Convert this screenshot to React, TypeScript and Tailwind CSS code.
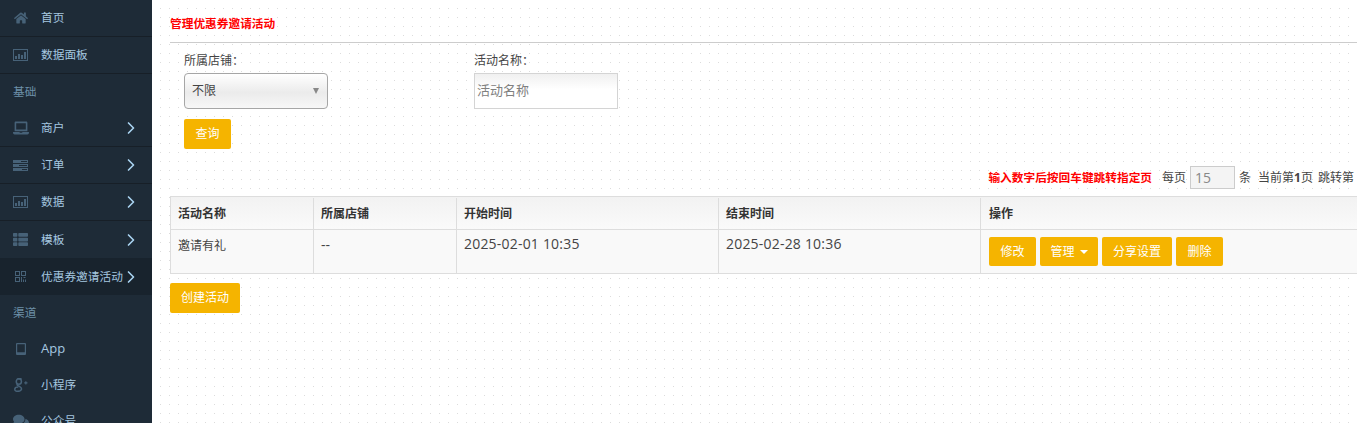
import type { ReactNode } from 'react'
import { ChevronRight } from 'lucide-react'
import { FaHome, FaLaptop, FaThList, FaComments } from 'react-icons/fa'

const font = "font-['Open_Sans','Noto_Sans_CJK_SC',sans-serif]"

function ChartIcon() {
  return (
    <svg width="15" height="12" viewBox="0 0 15 12" fill="none">
      <rect x="0.5" y="0.5" width="14" height="11" stroke="currentColor" />
      <path d="M2 7h2v3H2zM5 5h2v5H5zM8 6h2v4H8zM11 3h2v7h-2z" fill="currentColor" />
    </svg>
  )
}

function StripesIcon() {
  return (
    <svg width="15" height="11" viewBox="0 0 15 11" fill="currentColor">
      <path d="M0 0h15v3H0zM0 4h15v3H0zM0 8h15v3H0z" />
      <path d="M8 1h6v1H8zM6 5h8v1H6zM9 9h5v1H9z" fill="#1e2b37" />
    </svg>
  )
}

function QrIcon() {
  return (
    <svg width="11" height="11" viewBox="0 0 11 11" fill="none" stroke="currentColor">
      <rect x="0.5" y="0.5" width="4" height="4" />
      <rect x="6.5" y="0.5" width="4" height="4" />
      <rect x="0.5" y="6.5" width="4" height="4" />
      <path d="M6.5 6v5M8.5 6.5h2M8.5 8.5v2.5M10.5 8.5v2.5" />
    </svg>
  )
}

function TabletIcon() {
  return (
    <svg width="10" height="12" viewBox="0 0 10 12" fill="currentColor">
      <path d="M1 0h8a1 1 0 0 1 1 1v10a1 1 0 0 1-1 1H1a1 1 0 0 1-1-1V1a1 1 0 0 1 1-1zm.2 1.200v8h7.600v-8z" fillRule="evenodd" />
    </svg>
  )
}

function GPlusIcon() {
  return (
    <svg width="14" height="14" viewBox="0 0 13 13" fill="none" stroke="currentColor" strokeWidth="1.4">
      <ellipse cx="4.500" cy="3.200" rx="2.400" ry="2.600" />
      <path d="M3.400 5.600C2 6.600 3.600 7 5 7.800c1.800 1 2.200 1.600 2 2.600-.3 1.400-1.900 2-3.600 2C1.600 12.400.7 11.500.7 10.400c0-1.200 1.500-2 3.300-2M7 .8H3.500" />
      <path d="M9.500 4.500h3M11 3v3" strokeWidth="1" />
    </svg>
  )
}

type Item = { type: 'link' | 'head'; label: string; icon?: ReactNode; arrow?: boolean; active?: boolean; plain?: boolean }

const menu: Item[] = [
  { type: 'link', label: '首页', icon: <FaHome size={14} /> },
  { type: 'link', label: '数据面板', icon: <ChartIcon /> },
  { type: 'head', label: '基础' },
  { type: 'link', label: '商户', icon: <FaLaptop size={16} />, arrow: true },
  { type: 'link', label: '订单', icon: <StripesIcon />, arrow: true },
  { type: 'link', label: '数据', icon: <ChartIcon />, arrow: true },
  { type: 'link', label: '模板', icon: <FaThList size={15} />, arrow: true, plain: true },
  { type: 'link', label: '优惠券邀请活动', icon: <QrIcon />, arrow: true, active: true, plain: true },
  { type: 'head', label: '渠道' },
  { type: 'link', label: 'App', icon: <TabletIcon />, plain: true },
  { type: 'link', label: '小程序', icon: <GPlusIcon />, plain: true },
  { type: 'link', label: '公众号', icon: <FaComments size={16} />, plain: true },
]

function Sidebar() {
  return (
    <aside className="h-[423px] w-[152px] shrink-0 overflow-hidden bg-[#1e2b37] text-[11.7px]">
      {menu.map((item) =>
        item.type === 'head' ? (
          <div key={item.label} className="flex h-[36px] items-center pl-[13px] text-[#6d90a8]">
            {item.label}
          </div>
        ) : (
          <div
            key={item.label}
            className={`flex items-center pr-[11px] text-[#a6c8e0] ${item.plain ? '' : 'border-b border-[#171f27]'} ${item.active || item.label === '模板' || !item.plain ? 'h-[37px]' : 'h-[36px]'} ${item.active ? 'bg-[#18232d]' : ''}`}
          >
            <span className="flex w-[41px] shrink-0 justify-center text-[#476278]">{item.icon}</span>
            <span className={`w-0 flex-1 whitespace-nowrap ${item.label === 'App' ? 'text-[13px]' : ''}`}>{item.label}</span>
            {item.arrow && <ChevronRight size={20} strokeWidth={2} className="shrink-0 text-[#a9d3f0]" />}
          </div>
        ),
      )}
    </aside>
  )
}

const btn = 'inline-flex h-[29px] items-center justify-center rounded-[2px] bg-[#f5b400] text-[12px] text-white'

function Main() {
  return (
    <main className="min-w-0 flex-1 overflow-hidden bg-white bg-[radial-gradient(circle,#dcdcdc_0.7px,transparent_0.8px)] bg-[length:9px_9px] bg-[position:4px_4px] pl-[18px] text-[12px] text-[#444]">
      <h1 className="flex h-[43px] items-center border-b border-[#ccc] pt-[5px] text-[11.7px] font-bold text-[#f00]">
        管理优惠券邀请活动
      </h1>
      <div className="flex pl-[14px] pt-[9px]">
        <div className="w-[290px]">
          <div className="h-[21px] leading-[17px]">所属店铺：</div>
          <div className="flex h-[36px] w-[144px] items-center justify-between rounded-[4px] border border-[#a6a6a6] bg-[linear-gradient(#fff,#ebebeb_55%,#f7f7f7)] pl-[7px] pr-[8px] text-[#444]">
            不限
            <span className="h-0 w-0 border-x-[3.5px] border-t-[6px] border-x-transparent border-t-[#888]" />
          </div>
        </div>
        <div>
          <div className="h-[21px] leading-[17px]">活动名称：</div>
          <div className="flex h-[36px] w-[144px] items-center border border-[#d4d4d4] bg-[linear-gradient(#f0f0f0,#fff_45%)] pl-[2px] text-[13px] text-[#808080]">
            活动名称
          </div>
        </div>
      </div>
      <div className="pl-[14px] pt-[10px]">
        <button className={`${btn} h-[30px] w-[47px]`}>查询</button>
      </div>
      <div className="mr-[3px] mt-[14px] flex h-[27px] items-center justify-end whitespace-nowrap pt-[2px]">
        <b className="mr-[10px] text-[11.7px] font-bold text-[#f00]">输入数字后按回车键跳转指定页</b>
        <span>每页</span>
        <span className="mx-[4px] flex h-[23px] w-[45px] items-center border border-[#ccc] bg-[#f4f4f4] pl-[4px] text-[14px] text-[#888]">15</span>
        <span>条</span>
        <span className="ml-[7px]">当前第<b>1</b>页</span>
        <span className="ml-[5px]">跳转第</span>
      </div>
      <div className="-mr-[1px] mt-[6px] border border-[#ddd]">
        <div className="flex h-[33px] border-b border-[#ddd] bg-[linear-gradient(#f2f2f2,#fafafa)] pt-[1px] font-bold text-[#333]">
          <div className="flex w-[143px] items-center border-r border-[#ddd] pl-[7px]">活动名称</div>
          <div className="flex w-[143px] items-center border-r border-[#ddd] pl-[7px]">所属店铺</div>
          <div className="flex w-[262px] items-center border-r border-[#ddd] pl-[7px]">开始时间</div>
          <div className="flex w-[262px] items-center border-r border-[#ddd] pl-[7px]">结束时间</div>
          <div className="flex flex-1 items-center pl-[8px]">操作</div>
        </div>
        <div className="flex h-[43px] bg-[#f9f9f9] text-[#444]">
          <div className="w-[143px] border-r border-[#ddd] pl-[7px] pt-[7px]">邀请有礼</div>
          <div className="w-[143px] border-r border-[#ddd] pl-[7px] pt-[4px] text-[14px]">--</div>
          <div className="w-[262px] border-r border-[#ddd] pl-[7px] pt-[3px] text-[14px] tracking-[0.2px]">2025-02-01 10:35</div>
          <div className="w-[262px] border-r border-[#ddd] pl-[7px] pt-[3px] text-[14px] tracking-[0.2px]">2025-02-28 10:36</div>
          <div className="flex flex-1 items-center gap-[4px] pl-[8px]">
            <button className={`${btn} w-[47px]`}>修改</button>
            <button className={`${btn} w-[58px] gap-[5px]`}>
              管理
              <span className="h-0 w-0 border-x-[4px] border-t-[4px] border-x-transparent border-t-white" />
            </button>
            <button className={`${btn} w-[70px]`}>分享设置</button>
            <button className={`${btn} w-[47px]`}>删除</button>
          </div>
        </div>
      </div>
      <button className={`${btn} mt-[9px] h-[30px] w-[70px]`}>创建活动</button>
    </main>
  )
}

export default function App() {
  return (
    <div className={`flex h-[423px] w-[1357px] overflow-hidden ${font}`}>
      <Sidebar />
      <Main />
    </div>
  )
}
